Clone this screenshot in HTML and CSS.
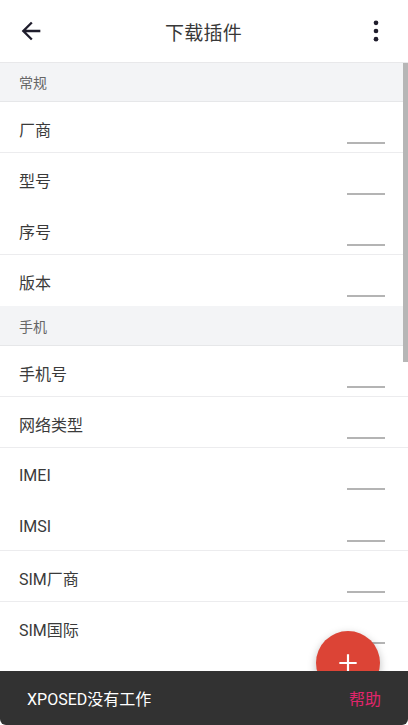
FILE: index.html
```html
<!DOCTYPE html>
<html lang="zh">
<head>
  <meta charset="UTF-8">
  <title>下载插件</title>
  <meta name="viewport" content="width=device-width, initial-scale=1.0">
  <link rel="stylesheet" href="styles.css">
</head>
<body>
  <div class="toolbar">
    <svg class="tb-icon" viewBox="0 0 24 24"><path d="M20 11H7.83l5.59-5.59L12 4l-8 8 8 8 1.41-1.41L7.83 13H20v-2z"/></svg>
    <div class="tb-title">下载插件</div>
    <svg class="tb-icon" viewBox="0 0 24 24"><circle cx="12" cy="5" r="2"/><circle cx="12" cy="12" r="2"/><circle cx="12" cy="19" r="2"/></svg>
  </div>
  <main class="list">
    <div class="section">常规</div>
    <div class="row"><span class="label">厂商</span><span class="field"></span></div>
    <div class="row no-line"><span class="label">型号</span><span class="field"></span></div>
    <div class="row"><span class="label">序号</span><span class="field"></span></div>
    <div class="row no-line"><span class="label">版本</span><span class="field"></span></div>
    <div class="section tall">手机</div>
    <div class="row"><span class="label">手机号</span><span class="field"></span></div>
    <div class="row"><span class="label">网络类型</span><span class="field"></span></div>
    <div class="row no-line"><span class="label">IMEI</span><span class="field"></span></div>
    <div class="row tall"><span class="label">IMSI</span><span class="field"></span></div>
    <div class="row"><span class="label">SIM厂商</span><span class="field"></span></div>
    <div class="row no-line"><span class="label">SIM国际</span><span class="field"></span></div>
    <div class="row"><span class="label">SIM国家</span><span class="field"></span></div>
  </main>
  <div class="scrollbar"></div>
  <button class="fab">
    <svg viewBox="0 0 24 24"><path d="M11 4h2v7h7v2h-7v7h-2v-7H4v-2h7z"/></svg>
  </button>
  <div class="snackbar">
    <span class="snack-text">XPOSED没有工作</span>
    <span class="snack-action">帮助</span>
  </div>
</body>
</html>
```

FILE: styles.css
```css
html, body {
  margin: 0; padding: 0;
  height: 100%;
  overflow: hidden;
  background: #fff;
  font-family: Roboto, "Noto Sans CJK SC", sans-serif;
  color: #333;
}
.toolbar {
  height: 62px;
  display: flex;
  align-items: center;
  justify-content: space-between;
  padding: 0 18px 0 17px;
  border-bottom: 1px solid #e8e8ea;
}
.tb-icon {
  width: 28px; height: 28px;
  fill: #1f1d2c;
}
.tb-title {
  font-size: 19px;
  color: #383838;
  letter-spacing: 0.3px;
}

.section {
  height: 38px;
  display: flex;
  align-items: center;
  padding-left: 19px;
  background: #f3f4f6;
  border-bottom: 1px solid #e6e7e9;
  font-size: 14px;
  color: #666;
}
.section.tall {
  height: 39px;
}
.row {
  height: 50px;
  display: flex;
  justify-content: space-between;
  padding: 0 23px 0 19px;
  border-bottom: 1px solid #ececee;
}
.row.tall {
  height: 51px;
}
.row.no-line {
  border-bottom-color: #fff;
}
.label {
  align-self: center;
  margin-top: 4px;
  font-size: 16px;
  color: #3a3a3a;
}
.field {
  align-self: flex-end;
  width: 38px;
  height: 2px;
  margin-bottom: 8px;
  background: #b4b4b4;
}

.scrollbar {
  position: fixed;
  right: 0; top: 63px;
  width: 5px; height: 299px;
  background: #b6b6b6;
}
.fab {
  position: fixed;
  left: 316px; top: 631px;
  width: 64px; height: 64px;
  border: none;
  border-radius: 50%;
  background: #dc4436;
  box-shadow: 0 3px 8px #0004;
  display: flex; align-items: center; justify-content: center;
  padding: 0;
}
.fab svg {
  width: 26px; height: 26px;
  fill: #fff;
}
.snackbar {
  position: fixed;
  left: 0; right: 0; bottom: 0;
  height: 54px;
  background: #323232;
  border-radius: 0 0 6px 6px;
  display: flex;
  align-items: center;
  justify-content: space-between;
  padding: 0 27px;
  font-size: 16px;
}
.snack-text {
  color: #fff;
}
.snack-action {
  color: #e0256c;
}
```
